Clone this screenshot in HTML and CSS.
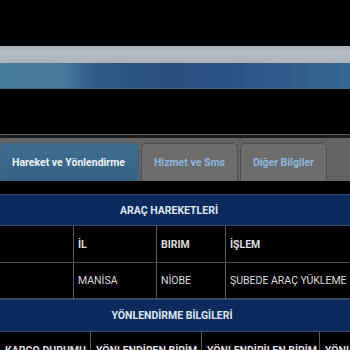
FILE: index.html
```html
<!DOCTYPE html>
<html lang="tr">
<head>
<meta charset="utf-8">
<link rel="stylesheet" href="styles.css">
</head>
<body>
<div class="screen">
  <div class="top-gap"></div>
  <div class="grey-bar"></div>
  <div class="blue-bar"></div>
  <div class="mid-gap"></div>
  <div class="rule-light"></div>
  <div class="rule-dark"></div>
  <div class="tabs">
    <div class="tab active">Hareket ve Yönlendirme</div>
    <div class="tab">Hizmet ve Sms</div>
    <div class="tab">Diğer Bilgiler</div>
  </div>
  <div class="tab-gap"></div>
  <div class="section-title">ARAÇ HAREKETLERİ</div>
  <div class="grid moves head">
    <div class="cell"></div>
    <div class="cell">İL</div>
    <div class="cell">BIRIM</div>
    <div class="cell">İŞLEM</div>
  </div>
  <div class="grid moves data">
    <div class="cell"></div>
    <div class="cell">MANİSA</div>
    <div class="cell">NİOBE</div>
    <div class="cell nowrap">ŞUBEDE ARAÇ YÜKLEME</div>
  </div>
  <div class="section-title second">YÖNLENDİRME BİLGİLERİ</div>
  <div class="grid routes head">
    <div class="cell">KARGO DURUMU</div>
    <div class="cell">YÖNLENDİREN BİRİM</div>
    <div class="cell">YÖNLENDİRİLEN BİRİM</div>
    <div class="cell">YÖNLENDİRME</div>
  </div>
</div>
</body>
</html>
```

FILE: styles.css
```css
* { box-sizing: border-box; }
html, body {
  margin: 0;
  padding: 0;
  background: #000;
}
body {
  font-family: Roboto, "Noto Sans", sans-serif;
  color: #e6e6e6;
}
.screen {
  width: 350px;
  height: 350px;
  overflow: hidden;
}
.top-gap { height: 46px; }
.grey-bar {
  height: 17px;
  background: linear-gradient(#a9aeb4, #b6bbc1 40%, #aeb3b9);
}
.blue-bar {
  height: 26px;
  background: linear-gradient(90deg, #467c9f 0, #457a9d 65px, #2e5a88 95px, #2a4f80 170px, #2c5686 240px, #346792 350px);
  border-bottom: 1px solid #4c6478;
}
.mid-gap { height: 45px; }
.rule-light { height: 1px; background: #5a5a5a; }
.rule-dark { height: 3px; background: #1b1b1b; }
.tabs {
  display: flex;
  gap: 2px;
  height: 43px;
  padding-top: 5px;
  background: #646464;
}
.tab {
  display: flex;
  align-items: center;
  padding: 0 12px;
  border: 1px solid #4f4f4f;
  border-bottom: none;
  border-radius: 5px 5px 0 0;
  background: #6d6d6d;
  color: #8db7de;
  font-size: 10.5px;
  font-weight: 700;
  white-space: nowrap;
}
.tab.active {
  padding: 0 13px 0 11px;
  border-color: #3d6585;
  background: linear-gradient(#3f6e90, #356285);
  color: #eef2f6;
}
.tab-gap { height: 13px; }
.section-title {
  height: 32px;
  display: flex;
  align-items: center;
  justify-content: center;
  padding-right: 12px;
  background: #0c2a5d;
  border-top: 1px solid #2c4672;
  border-bottom: 1px solid #3a4d6e;
  color: #dfe6f0;
  font-size: 10.5px;
  font-weight: 700;
}
.section-title.second { height: 33px; padding-right: 6px; }
.grid {
  display: grid;
  border-bottom: 1px solid #4a4a4a;
}
.moves { grid-template-columns: 74px 83px 69px 140px; }
.routes { grid-template-columns: 91px 111px 118px 80px; }
.moves.head { height: 37px; }
.moves.data { height: 36px; }
.routes.head { height: 30px; }
.cell {
  display: flex;
  align-items: center;
  padding-left: 4px;
  border-right: 1px solid #5a5a5a;
  font-size: 10.5px;
  color: #dedede;
  white-space: nowrap;
  overflow: hidden;
}
.head .cell { font-weight: 700; }
.routes .cell {
  align-items: flex-start;
  padding-top: 12px;
  padding-left: 5px;
}
.nowrap { overflow: visible; }
```
